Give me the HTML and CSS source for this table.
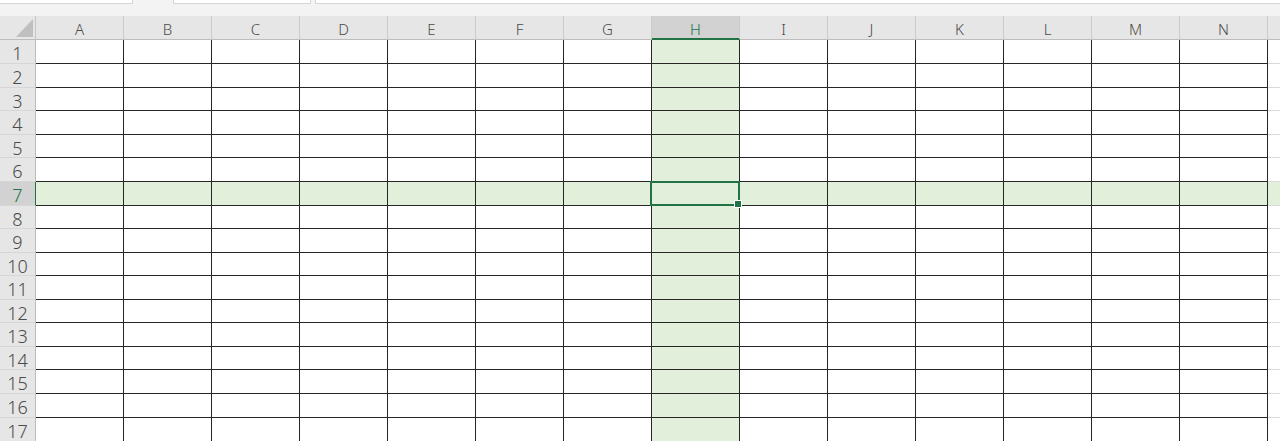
FILE: index.html
```html
<!DOCTYPE html>
<html>
<head>
  <title>Sheet1</title>
  <link rel="stylesheet" href="styles.css">
</head>
<body>
  <div class="topbar">
    <div class="box name-box"></div>
    <div class="box tools-box"></div>
    <div class="box formula-box"></div>
  </div>

  <div class="sheet">
    <div class="row head">
      <div class="corner">
        <svg width="17" height="18" viewBox="0 0 17 18"><polygon points="17,0 17,18 0,18" fill="#bfbfbf"/></svg>
      </div>
      <div class="ch">A</div><div class="ch">B</div><div class="ch">C</div><div class="ch">D</div>
      <div class="ch">E</div><div class="ch">F</div><div class="ch">G</div><div class="ch">H</div>
      <div class="ch">I</div><div class="ch">J</div><div class="ch">K</div><div class="ch">L</div>
      <div class="ch">M</div><div class="ch">N</div><div class="ch edge"></div>
    </div>

    <div class="row"><div class="rh">1</div><div class="c"></div><div class="c"></div><div class="c"></div><div class="c"></div><div class="c"></div><div class="c"></div><div class="c"></div><div class="c"></div><div class="c"></div><div class="c"></div><div class="c"></div><div class="c"></div><div class="c"></div><div class="c"></div><div class="c edge"></div></div>
    <div class="row"><div class="rh">2</div><div class="c"></div><div class="c"></div><div class="c"></div><div class="c"></div><div class="c"></div><div class="c"></div><div class="c"></div><div class="c"></div><div class="c"></div><div class="c"></div><div class="c"></div><div class="c"></div><div class="c"></div><div class="c"></div><div class="c edge"></div></div>
    <div class="row"><div class="rh">3</div><div class="c"></div><div class="c"></div><div class="c"></div><div class="c"></div><div class="c"></div><div class="c"></div><div class="c"></div><div class="c"></div><div class="c"></div><div class="c"></div><div class="c"></div><div class="c"></div><div class="c"></div><div class="c"></div><div class="c edge"></div></div>
    <div class="row"><div class="rh">4</div><div class="c"></div><div class="c"></div><div class="c"></div><div class="c"></div><div class="c"></div><div class="c"></div><div class="c"></div><div class="c"></div><div class="c"></div><div class="c"></div><div class="c"></div><div class="c"></div><div class="c"></div><div class="c"></div><div class="c edge"></div></div>
    <div class="row"><div class="rh">5</div><div class="c"></div><div class="c"></div><div class="c"></div><div class="c"></div><div class="c"></div><div class="c"></div><div class="c"></div><div class="c"></div><div class="c"></div><div class="c"></div><div class="c"></div><div class="c"></div><div class="c"></div><div class="c"></div><div class="c edge"></div></div>
    <div class="row"><div class="rh">6</div><div class="c"></div><div class="c"></div><div class="c"></div><div class="c"></div><div class="c"></div><div class="c"></div><div class="c"></div><div class="c"></div><div class="c"></div><div class="c"></div><div class="c"></div><div class="c"></div><div class="c"></div><div class="c"></div><div class="c edge"></div></div>
    <div class="row sel"><div class="rh">7</div><div class="c"></div><div class="c"></div><div class="c"></div><div class="c"></div><div class="c"></div><div class="c"></div><div class="c"></div><div class="c active"></div><div class="c"></div><div class="c"></div><div class="c"></div><div class="c"></div><div class="c"></div><div class="c"></div><div class="c edge"></div></div>
    <div class="row"><div class="rh">8</div><div class="c"></div><div class="c"></div><div class="c"></div><div class="c"></div><div class="c"></div><div class="c"></div><div class="c"></div><div class="c"></div><div class="c"></div><div class="c"></div><div class="c"></div><div class="c"></div><div class="c"></div><div class="c"></div><div class="c edge"></div></div>
    <div class="row"><div class="rh">9</div><div class="c"></div><div class="c"></div><div class="c"></div><div class="c"></div><div class="c"></div><div class="c"></div><div class="c"></div><div class="c"></div><div class="c"></div><div class="c"></div><div class="c"></div><div class="c"></div><div class="c"></div><div class="c"></div><div class="c edge"></div></div>
    <div class="row"><div class="rh">10</div><div class="c"></div><div class="c"></div><div class="c"></div><div class="c"></div><div class="c"></div><div class="c"></div><div class="c"></div><div class="c"></div><div class="c"></div><div class="c"></div><div class="c"></div><div class="c"></div><div class="c"></div><div class="c"></div><div class="c edge"></div></div>
    <div class="row"><div class="rh">11</div><div class="c"></div><div class="c"></div><div class="c"></div><div class="c"></div><div class="c"></div><div class="c"></div><div class="c"></div><div class="c"></div><div class="c"></div><div class="c"></div><div class="c"></div><div class="c"></div><div class="c"></div><div class="c"></div><div class="c edge"></div></div>
    <div class="row"><div class="rh">12</div><div class="c"></div><div class="c"></div><div class="c"></div><div class="c"></div><div class="c"></div><div class="c"></div><div class="c"></div><div class="c"></div><div class="c"></div><div class="c"></div><div class="c"></div><div class="c"></div><div class="c"></div><div class="c"></div><div class="c edge"></div></div>
    <div class="row"><div class="rh">13</div><div class="c"></div><div class="c"></div><div class="c"></div><div class="c"></div><div class="c"></div><div class="c"></div><div class="c"></div><div class="c"></div><div class="c"></div><div class="c"></div><div class="c"></div><div class="c"></div><div class="c"></div><div class="c"></div><div class="c edge"></div></div>
    <div class="row"><div class="rh">14</div><div class="c"></div><div class="c"></div><div class="c"></div><div class="c"></div><div class="c"></div><div class="c"></div><div class="c"></div><div class="c"></div><div class="c"></div><div class="c"></div><div class="c"></div><div class="c"></div><div class="c"></div><div class="c"></div><div class="c edge"></div></div>
    <div class="row"><div class="rh">15</div><div class="c"></div><div class="c"></div><div class="c"></div><div class="c"></div><div class="c"></div><div class="c"></div><div class="c"></div><div class="c"></div><div class="c"></div><div class="c"></div><div class="c"></div><div class="c"></div><div class="c"></div><div class="c"></div><div class="c edge"></div></div>
    <div class="row"><div class="rh">16</div><div class="c"></div><div class="c"></div><div class="c"></div><div class="c"></div><div class="c"></div><div class="c"></div><div class="c"></div><div class="c"></div><div class="c"></div><div class="c"></div><div class="c"></div><div class="c"></div><div class="c"></div><div class="c"></div><div class="c edge"></div></div>
    <div class="row"><div class="rh">17</div><div class="c"></div><div class="c"></div><div class="c"></div><div class="c"></div><div class="c"></div><div class="c"></div><div class="c"></div><div class="c"></div><div class="c"></div><div class="c"></div><div class="c"></div><div class="c"></div><div class="c"></div><div class="c"></div><div class="c edge"></div></div>
  </div>
</body>
</html>
```

FILE: styles.css
```css
* { box-sizing: border-box; }
body { margin: 0; background: #fff; font-family: "Noto Sans", "Liberation Sans", sans-serif; overflow: hidden; }

/* strip above the sheet */
.topbar { display: flex; height: 16px; background: #f3f3f3; }
.box { height: 4px; background: #fff; border: 1px solid #d6d6d6; border-top: none; }
.name-box { width: 133px; border-left: none; }
.tools-box { width: 138px; margin-left: 40px; }
.formula-box { flex: 1; margin-left: 4px; border-right: none; }

/* grid */
.sheet {
  display: grid;
  grid-template-columns: 36px repeat(14, 88px) 1fr;
  grid-template-rows: 24px 24px 24px 23px 24px 23px 24px 24px 23px 24px 23px 24px 23px 24px 23px 24px 24px 24px;
}
.row { display: contents; }

.corner { background: #e6e6e6; border-right: 1px solid #c6c6c6; border-bottom: 1px solid #bdbdbd; display: flex; align-items: flex-end; justify-content: flex-end; padding: 0 2px 2px 0; }
.corner svg { display: block; }

.ch { background: #e6e6e6; border-right: 1px solid #cbcbcb; border-bottom: 1px solid #bdbdbd; color: #4a4a4a; font-size: 15px; font-weight: 300; text-align: center; line-height: 27px; }
.ch.edge { border-right: none; }
.ch:nth-child(9) { background: #d2d2d2; color: #217346; border-bottom: 2px solid #217346; }

.rh { background: #e6e6e6; border-right: 1px solid #bdbdbd; border-bottom: 1px solid #d6d6d6; color: #4a4a4a; font-size: 18px; font-weight: 300; text-align: center; line-height: 27px; }

.c { background: #fff; border-right: 1px solid #262626; border-bottom: 1px solid #262626; }
.c.edge { border-right: none; border-bottom-color: #dadada; }

/* current column and row */
.row > .c:nth-child(9) { background: #e2efda; }
.sel .c { background: #e2efda; }
.sel .rh { background: #d2d2d2; color: #217346; border-right-color: #217346; }

.active { position: relative; }
.active::after { content: ""; position: absolute; top: -1px; left: -2px; right: -1px; bottom: -1px; border: 2px solid #217346; }
.active::before { content: ""; position: absolute; right: -3px; bottom: -3px; width: 6px; height: 6px; background: #217346; border: 1px solid #fff; z-index: 1; }
```
